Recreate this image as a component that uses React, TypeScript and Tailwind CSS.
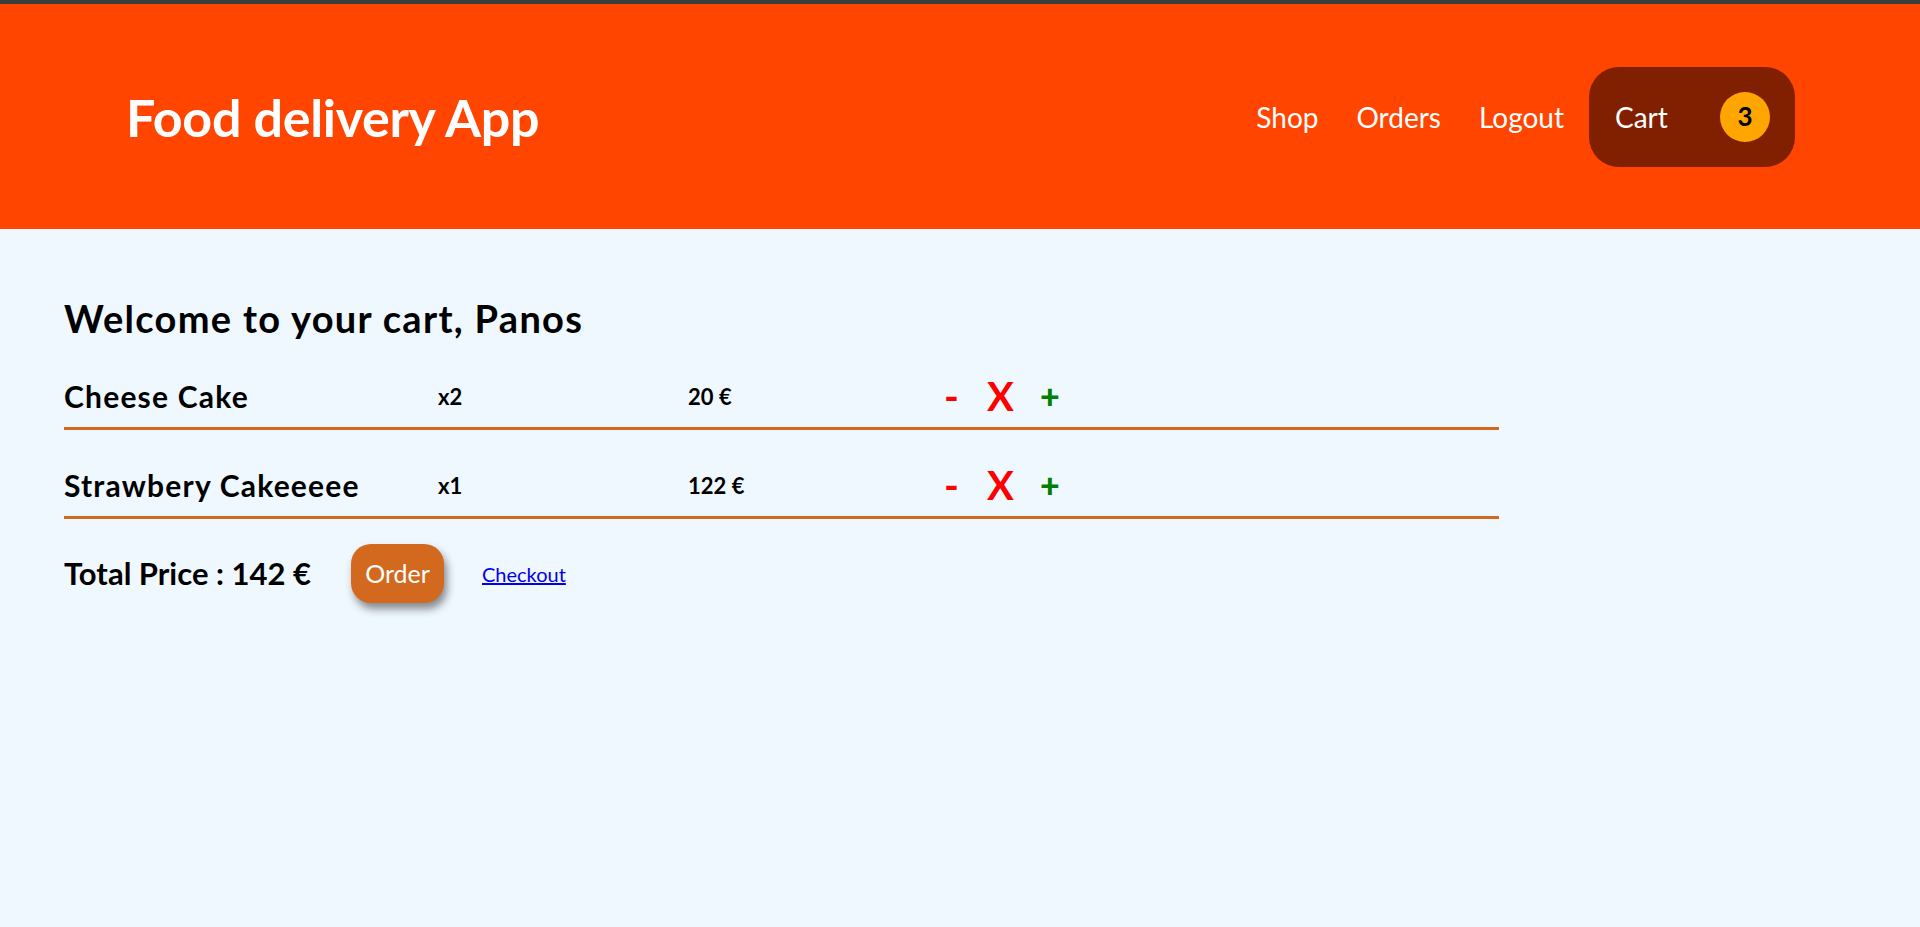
import { useState } from 'react';

interface CartItem {
  id: number;
  name: string;
  qty: number;
  price: number;
}

const initialItems: CartItem[] = [
  { id: 1, name: 'Cheese Cake', qty: 2, price: 20 },
  { id: 2, name: 'Strawbery Cakeeeee', qty: 1, price: 122 },
];

export default function App() {
  const [items] = useState<CartItem[]>(initialItems);
  const total = items.reduce((sum, i) => sum + i.price, 0);

  return (
    <div className="min-h-[927px] bg-[#f0f8ff] font-['Lato',sans-serif] text-black">
      <div className="h-[4px] bg-[#3c3c3c]"></div>
      <header className="flex h-[225px] items-center justify-between bg-[#ff4500] pl-[126px] pr-[125px]">
        <h1 className="text-[52px] font-bold tracking-[-0.3px] text-white">Food delivery App</h1>
        <nav className="flex items-center">
          <a className="mr-[38px] text-[28px] text-white">Shop</a>
          <a className="mr-[38px] text-[28px] text-white">Orders</a>
          <a className="mr-[25px] text-[28px] text-white">Logout</a>
          <button className="flex h-[100px] w-[206px] items-center rounded-[30px] bg-[#802000] pl-[26px]">
            <span className="text-[28px] text-white">Cart</span>
            <span className="ml-auto mr-[25px] flex h-[50px] w-[50px] items-center justify-center rounded-full bg-[#ffa500] text-[26px] font-bold text-black">
              {items.reduce((s, i) => s + i.qty, 0)}
            </span>
          </button>
        </nav>
      </header>

      <main className="pl-[64px] pt-[66px]">
        <h2 className="flex h-[46px] items-center text-[38px] font-bold tracking-[1.3px]">Welcome to your cart, Panos</h2>
        <div className="w-[1435px]">
          {items.map((item) => (
            <div key={item.id} className="mt-[27px] flex h-[62px] items-center border-b-[3px] border-[#d2691e] pb-[3px]">
              <div className="w-[374px] text-[30px] font-bold tracking-[1.2px]">{item.name}</div>
              <div className="w-[250px] text-[22px] font-bold">x{item.qty}</div>
              <div className="w-[256px] text-[22px] font-bold">{item.price} €</div>
              <div className="flex items-center">
                <button className="w-[43px] text-left text-[40px] font-bold leading-none text-[#ff0000]">-</button>
                <button className="w-[53px] text-left text-[40px] font-bold leading-none text-[#ff0000]">X</button>
                <button className="text-[34px] font-black leading-none text-[#008000]">+</button>
              </div>
            </div>
          ))}
        </div>
        <div className="mt-[25px] flex items-center">
          <span className="text-[31px] font-bold">Total Price : {total} €</span>
          <button className="ml-[40px] h-[59px] w-[93px] rounded-[20px] bg-[#d2691e] text-[25px] text-white shadow-[3px_6px_8px_rgba(0,0,0,0.45)]">
            Order
          </button>
          <a href="#" className="ml-[38px] text-[20px] text-[#0000ee] underline">Checkout</a>
        </div>
      </main>
    </div>
  );
}
